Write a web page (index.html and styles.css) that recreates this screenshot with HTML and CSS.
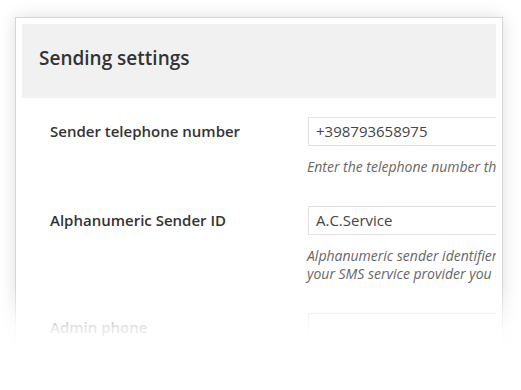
FILE: index.html
```html
<!DOCTYPE html>
<html lang="en">
<head>
  <meta charset="UTF-8" />
  <meta name="viewport" content="width=device-width, initial-scale=1.0"/>
  <title>Sending settings</title>
  <link rel="stylesheet" href="styles.css">
</head>
<body>

<div class="page">
  <div class="card">
    <div class="inner">
      <div class="header">
        <h1>Sending settings</h1>
      </div>

      <div class="form">
        <div class="row">
          <label class="label">Sender telephone number</label>
          <div class="field">
            <div class="input">+398793658975</div>
            <p class="help">Enter the telephone number that will appear as sender</p>
          </div>
        </div>

        <div class="row">
          <label class="label">Alphanumeric Sender ID</label>
          <div class="field">
            <div class="input">A.C.Service</div>
            <p class="help">Alphanumeric sender identifier<br>your SMS service provider you use</p>
          </div>
        </div>

        <div class="row">
          <label class="label">Admin phone</label>
          <div class="field">
            <div class="input"></div>
          </div>
        </div>
      </div>
    </div>
  </div>

  <!-- fade at the bottom -->
  <div class="fade"></div>
</div>

</body>
</html>
```

FILE: styles.css
```css
* {
  margin: 0;
  padding: 0;
  box-sizing: border-box;
}

body {
  font-family: 'Open Sans', sans-serif;
  background-color: #fff;
  color: #333;
  overflow: hidden;
}

.page {
  position: relative;
  height: 390px;
  overflow: hidden;
  padding: 17px 0 0 15px;
}

.card {
  width: 488px;
  height: 380px;
  background-color: #fff;
  border: 1px solid #d6d6d6;
  padding: 6px 6px 0 6px;
  box-shadow: 0 0 16px rgba(0, 0, 0, 0.13);
}

.inner {
  width: 474px;
  height: 100%;
  overflow: hidden;
}

.header {
  height: 74px;
  background-color: #f1f1f1;
  display: flex;
  align-items: center;
  padding-left: 17px;
  padding-bottom: 6px;
}

.header h1 {
  font-size: 19px;
  font-weight: 600;
  color: #333;
}

.form {
  padding: 19px 0 0 28px;
}

.row {
  display: flex;
  margin-bottom: 30px;
}

.label {
  width: 258px;
  flex-shrink: 0;
  height: 28px;
  display: flex;
  align-items: center;
  font-size: 15px;
  font-weight: 600;
  color: #333;
}

.field {
  width: 300px;
  flex-shrink: 0;
}

.input {
  height: 29px;
  border: 1px solid #e2e2e2;
  padding-left: 7px;
  font-size: 15px;
  line-height: 27px;
  color: #444;
}

.help {
  margin-top: 12px;
  margin-left: -1px;
  font-size: 14px;
  font-style: italic;
  line-height: 18px;
  color: #666;
  white-space: nowrap;
}

.fade {
  position: absolute;
  left: 0;
  right: 0;
  top: 286px;
  bottom: 0;
  background: linear-gradient(to bottom, rgba(255,255,255,0) 0, rgba(255,255,255,0.88) 42px, #fff 66px);
}
```
